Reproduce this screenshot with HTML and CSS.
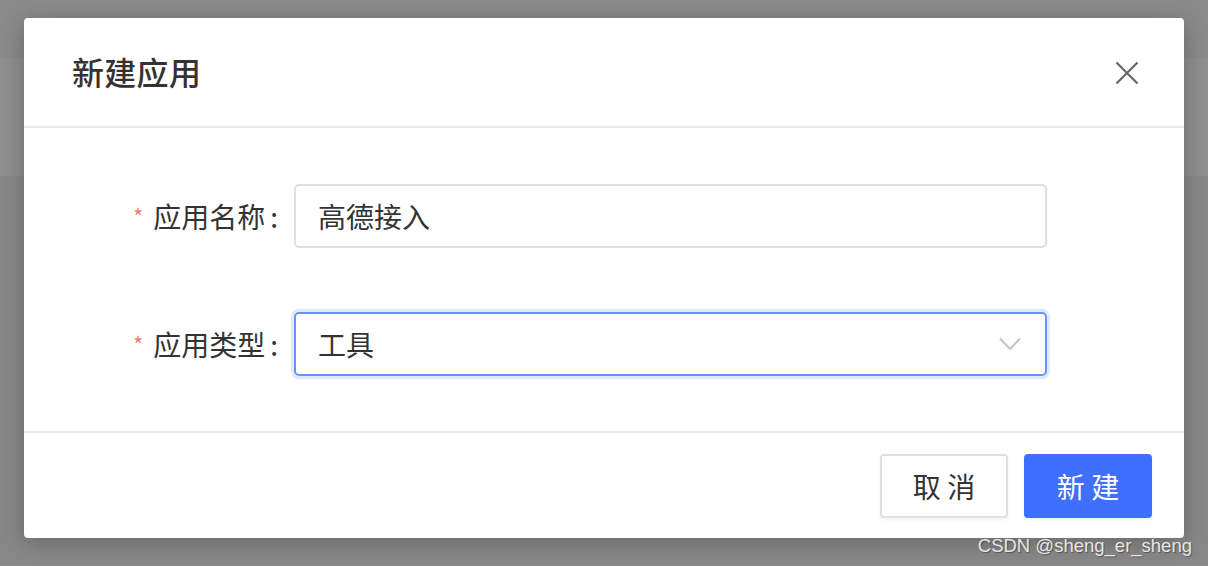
FILE: index.html
```html
<!DOCTYPE html>
<html lang="zh-CN">
<head>
<meta charset="utf-8">
<title>新建应用</title>
<link rel="stylesheet" href="styles.css">
</head>
<body>
<div class="page">
  <div class="bar-top"></div>
  <div class="bar-band"></div>
  <div class="bar-rest"></div>
</div>
<div class="modal">
  <div class="modal-header">
    <div class="modal-title">新建应用</div>
    <svg class="close" width="24" height="24" viewBox="0 0 24 24"><path d="M1.5 1.5 L22.5 22.5 M22.5 1.5 L1.5 22.5" stroke="#666" stroke-width="2.2" fill="none"/></svg>
  </div>
  <div class="modal-body">
    <div class="form-row">
      <div class="label"><span class="req">*</span>应用名称<span class="colon">:</span></div>
      <div class="input">高德接入</div>
    </div>
    <div class="form-row">
      <div class="label"><span class="req">*</span>应用类型<span class="colon">:</span></div>
      <div class="input select">工具
        <svg class="arrow" width="22" height="14" viewBox="0 0 22 14"><path d="M1 1.5 L11 12 L21 1.5" stroke="#c0c4cc" stroke-width="2" fill="none"/></svg>
      </div>
    </div>
  </div>
  <div class="modal-footer">
    <button class="btn">取 消</button>
    <button class="btn primary">新 建</button>
  </div>
</div>
<div class="watermark">CSDN @sheng_er_sheng</div>
</body>
</html>
```
FILE: styles.css
```css
html, body {
  margin: 0;
  padding: 0;
  width: 1208px;
  height: 566px;
  overflow: hidden;
  font-family: "Noto Sans CJK SC", "Noto Sans", sans-serif;
}
.page {
  display: flex;
  flex-direction: column;
  height: 566px;
}
.bar-top { height: 58px; background: #8a8b8a; }
.bar-band { height: 118px; background: #8e8f8e; }
.bar-rest { flex: 1; background: #878887; }

.modal {
  position: absolute;
  left: 24px;
  top: 18px;
  width: 1160px;
  height: 520px;
  background: #fff;
  border-radius: 4px;
  box-shadow: 0 4px 24px rgba(0,0,0,0.25);
  display: flex;
  flex-direction: column;
}
.modal-header {
  height: 108px;
  border-bottom: 2px solid #e8e8e8;
  display: flex;
  align-items: center;
  justify-content: space-between;
  padding: 0 45px 0 48px;
}
.modal-title {
  font-size: 32px;
  font-weight: 500;
  color: #333;
  letter-spacing: 0.3px;
  margin-top: -3px;
}
.close { display: block; margin-top: 1px; }

.modal-body {
  height: 305px;
  box-sizing: border-box;
  padding: 56px 0 0;
  display: flex;
  flex-direction: column;
  gap: 64px;
  border-bottom: 2px solid #e8e8e8;
}
.form-row {
  display: flex;
  align-items: center;
  height: 64px;
}
.label {
  width: 254px;
  margin-right: 16px;
  text-align: right;
  font-size: 28px;
  color: #333;
}
.colon { margin-left: 5px; }
.req {
  color: #f5806a;
  font-size: 22px;
  margin-right: 10px;
  vertical-align: 3px;
}
.input {
  width: 753px;
  height: 64px;
  box-sizing: border-box;
  border: 2px solid #dcdfe6;
  border-radius: 5px;
  padding-left: 22px;
  display: flex;
  align-items: center;
  font-size: 28px;
  color: #333;
}
.select {
  border-color: #6a92fb;
  box-shadow: 0 0 0 3px #e1e9fe;
  justify-content: space-between;
  padding-right: 24px;
}
.arrow { display: block; }

.modal-footer {
  flex: 1;
  display: flex;
  justify-content: flex-end;
  align-items: center;
  gap: 16px;
  padding-right: 32px;
}
.btn {
  width: 128px;
  height: 64px;
  border: 2px solid #dcdfe6;
  border-radius: 4px;
  background: #fff;
  color: #333;
  font-family: "Noto Sans CJK SC", "Noto Sans", sans-serif;
  font-size: 28px;
  padding: 0;
  box-shadow: 0 2px 3px rgba(0,0,0,0.05);
}
.btn.primary {
  background: #3f6ffe;
  border-color: #3f6ffe;
  color: #fff;
}
.watermark {
  position: absolute;
  right: 16px;
  bottom: 9px;
  font-family: "Liberation Sans", Arial, sans-serif;
  font-size: 18.5px;
  color: #e6e6e6;
  text-shadow: 1px 1px 1px rgba(0,0,0,0.35);
}
```
